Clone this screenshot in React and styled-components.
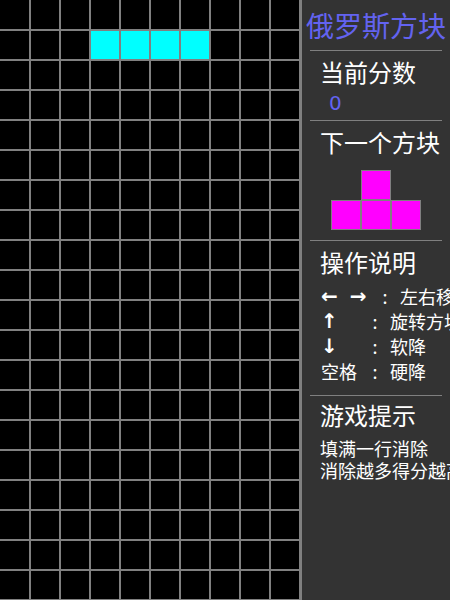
import React from 'react';
import styled, { createGlobalStyle } from 'styled-components';

const GlobalStyle = createGlobalStyle`
  html, body {
    margin: 0;
    padding: 0;
    background: #000;
    overflow: hidden;
  }
  body {
    font-family: "Noto Sans CJK SC", "DejaVu Sans", sans-serif;
  }
`;

const Game = styled.div`
  display: flex;
  width: 450px;
  height: 600px;
  overflow: hidden;
`;

const Board = styled.div`
  display: grid;
  grid-template-columns: 29px repeat(9, 28px);
  grid-template-rows: 29px repeat(19, 28px);
  gap: 2px;
  padding: 0 1px 1px 0;
  background: #808080;
  flex-shrink: 0;
`;

const Cell = styled.div`
  background: ${(p) => p.$color || '#000'};
`;

const Panel = styled.div`
  flex: 1;
  min-width: 0;
  background: #333;
  border-left: 2px solid #808080;
  padding: 0 8px;
  color: #fff;
  overflow: hidden;
  white-space: nowrap;
`;

const Title = styled.h1`
  margin: 0 -8px;
  height: 50px;
  line-height: 50px;
  font-size: 28px;
  font-weight: normal;
  text-align: center;
  color: #6363f0;
`;

const Divider = styled.div`
  height: 1px;
  background: #808080;
`;

const Section = styled.div`
  padding: ${(p) => p.$pad};
`;

const Heading = styled.h2`
  margin: 0;
  padding-left: 10px;
  font-size: 24px;
  font-weight: normal;
  line-height: 30px;
`;

const Score = styled.div`
  margin-top: 4px;
  padding-left: 19px;
  font-family: "DejaVu Sans", sans-serif;
  font-size: 20px;
  line-height: 24px;
  color: #6363f0;
`;

const Preview = styled.div`
  display: grid;
  grid-template-columns: repeat(3, 30px);
  grid-template-rows: repeat(2, 30px);
  justify-content: center;
  margin-top: 13px;
`;

const PreviewCell = styled.div`
  box-sizing: border-box;
  background: ${(p) => (p.$on ? '#ff00ff' : 'transparent')};
  border: ${(p) => (p.$on ? '1px solid #808080' : 'none')};
`;

const Controls = styled.div`
  margin-top: 6px;
  padding-left: 11px;
`;

const Row = styled.div`
  display: flex;
  align-items: center;
  height: 25px;
  font-size: 18px;
`;

const Key = styled.span`
  display: inline-flex;
  flex-shrink: 0;
  gap: 12px;
  width: ${(p) => (p.$wide ? '61px' : '51px')};
  font-family: ${(p) => (p.$arrow ? '"DejaVu Sans", sans-serif' : 'inherit')};
  font-size: ${(p) => (p.$arrow ? '20px' : 'inherit')};
  font-weight: ${(p) => (p.$arrow ? 'bold' : 'normal')};
`;

const Colon = styled.span`
  flex-shrink: 0;
  width: 6px;
  text-align: center;
  margin-right: 12px;
`;

const Action = styled.span`
  flex-shrink: 0;
`;

const Tips = styled.div`
  margin-top: 7px;
  padding-left: 10px;
  font-size: 18px;
  line-height: 22px;
`;

const ROWS = 20;
const COLS = 10;
const board = Array.from({ length: ROWS }, () => Array(COLS).fill(null));
[3, 4, 5, 6].forEach((c) => {
  board[1][c] = '#00ffff';
});

const nextPiece = [
  [0, 1, 0],
  [1, 1, 1],
];

const controls = [
  { keys: ['←', '→'], arrow: true, wide: true, action: '左右移动' },
  { keys: ['↑'], arrow: true, action: '旋转方块' },
  { keys: ['↓'], arrow: true, action: '软降' },
  { keys: ['空格'], action: '硬降' },
];

const App = () => {
  return (
    <>
      <GlobalStyle />
      <Game>
        <Board>
          {board.map((row, r) =>
            row.map((color, c) => <Cell key={`${r}-${c}`} $color={color} />)
          )}
        </Board>
        <Panel>
          <Title>俄罗斯方块</Title>
          <Divider />
          <Section $pad="6px 0 5px">
            <Heading>当前分数</Heading>
            <Score>0</Score>
          </Section>
          <Divider />
          <Section $pad="6px 0 10px">
            <Heading>下一个方块</Heading>
            <Preview>
              {nextPiece.flat().map((on, i) => (
                <PreviewCell key={i} $on={on} />
              ))}
            </Preview>
          </Section>
          <Divider />
          <Section $pad="6px 0 12px">
            <Heading>操作说明</Heading>
            <Controls>
              {controls.map((item) => (
                <Row key={item.action}>
                  <Key $arrow={item.arrow} $wide={item.wide}>
                    {item.keys.map((k) => (
                      <span key={k}>{k}</span>
                    ))}
                  </Key>
                  <Colon>:</Colon>
                  <Action>{item.action}</Action>
                </Row>
              ))}
            </Controls>
          </Section>
          <Divider />
          <Section $pad="4px 0 0">
            <Heading>游戏提示</Heading>
            <Tips>
              <div>填满一行消除</div>
              <div>消除越多得分越高</div>
            </Tips>
          </Section>
        </Panel>
      </Game>
    </>
  );
};

export default App;
